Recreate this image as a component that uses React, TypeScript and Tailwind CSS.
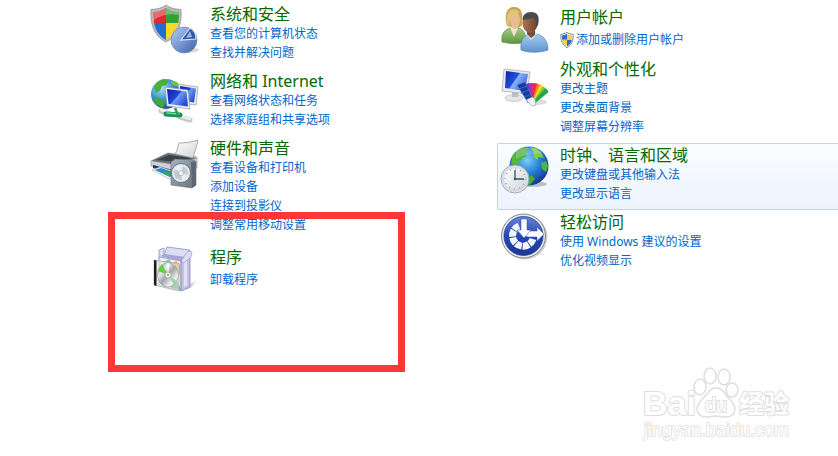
import type { ReactNode } from "react";
import clsx from "clsx";

type Category = {
  title: string;
  links: string[];
  icon: ReactNode;
  shield?: boolean;
  active?: boolean;
};

const iconClass = "w-12 h-12 shrink-0 overflow-visible";

function ShieldShape() {
  return (
    <>
      <path d="M16 1c5 3.500 9 4 15 4.500C32 20 28 32 16 38 4 32 0 20 1 5.500 7 5 11 4.500 16 1Z" fill="#b9bdc0" stroke="#8d9296" strokeWidth="0.8" />
      <path d="M16 4v15H4C3 15 3 11 3 8c5 0 9-1.500 13-4Z" fill="#dd2b27" />
      <path d="M16 4c4 2.500 8 4 13 4 0 3 0 7-1 11H16Z" fill="#35a037" />
      <path d="M4 19h12v17C9 32 5.500 26 4 19Z" fill="#1f6fd0" />
      <path d="M28 19H16v17c7-4 10.500-10 12-17Z" fill="#fbd72b" />
      <path d="M3 8c5 0 9-1.500 13-4 4 2.500 8 4 13 4v3C20 9 10 11 3 17Z" fill="#fff" opacity="0.3" />
    </>
  );
}

function SecurityIcon() {
  return (
    <svg viewBox="0 0 48 48" className={iconClass} aria-hidden="true">
      <defs>
        <linearGradient id="pie" x1="0" y1="0" x2="1" y2="1">
          <stop offset="0" stopColor="#b4cbed" />
          <stop offset="0.5" stopColor="#7898d0" />
          <stop offset="1" stopColor="#3c5ea8" />
        </linearGradient>
      </defs>
      <ShieldShape />
      <ellipse cx="38" cy="46" rx="11" ry="3" fill="#000" opacity="0.15" />
      <circle cx="34" cy="36" r="13" fill="url(#pie)" stroke="#6c88bb" strokeWidth="0.7" />
      <path d="M31 36 40 24c4 2 6 6 6 11Z" fill="#3458a8" stroke="#d5e3f7" strokeWidth="1.2" />
      <path d="m36 34 4-7 2 6Z" fill="#9ab8ea" />
    </svg>
  );
}

function NetworkIcon() {
  return (
    <svg viewBox="0 0 48 48" className={iconClass} aria-hidden="true">
      <defs>
        <radialGradient id="netGlobe" cx="0.35" cy="0.3" r="0.8">
          <stop offset="0" stopColor="#a9e2f8" />
          <stop offset="0.5" stopColor="#3a8fd0" />
          <stop offset="1" stopColor="#124285" />
        </radialGradient>
        <linearGradient id="netScreen" x1="0" y1="0" x2="1" y2="0.7">
          <stop offset="0" stopColor="#0a1fae" />
          <stop offset="0.5" stopColor="#1f47d8" />
          <stop offset="0.55" stopColor="#6d9df5" />
          <stop offset="1" stopColor="#2446ce" />
        </linearGradient>
      </defs>
      <circle cx="16" cy="23" r="15" fill="url(#netGlobe)" />
      <path d="M4 17c1-5 5-8 10-9l5 2-3 4-4 1-2 5-4 2Z" fill="#4cae3b" />
      <path d="m3 26 7 1 5 4-2 6C8 35 4 32 3 26Z" fill="#43a835" />
      <path d="m21 9 6 2 3 5-5-1-4-2Z" fill="#6cc44c" />
      <path d="m28 13 20 3-2 18-16-2Z" fill="#e9ecf1" stroke="#8f98a7" strokeWidth="0.7" />
      <path d="m30 15 16 2.500-2 14-13-2Z" fill="url(#netScreen)" />
      <path d="m15 16 23 3 2 19-23-3Z" fill="#eef0f4" stroke="#8f98a7" strokeWidth="0.7" />
      <path d="m17 18 19.500 2.500 1.500 15-19.500-2.500Z" fill="url(#netScreen)" />
      <path d="m11 40 7 2M30 46l10 3" stroke="#c3c8cc" strokeWidth="5" strokeLinecap="round" />
      <path d="m11 39 7 2M30 45l10 3" stroke="#eceff0" strokeWidth="2.500" strokeLinecap="round" />
      <path d="m16 43 14 1" stroke="#179153" strokeWidth="5" strokeLinecap="round" />
      <path d="m17 42 12 1" stroke="#7ad8a0" strokeWidth="1.500" strokeLinecap="round" />
      <path d="m25 37 3 7" stroke="#2a9c5c" strokeWidth="2.500" />
    </svg>
  );
}

function PrinterIcon() {
  return (
    <svg viewBox="0 0 48 48" className={iconClass} aria-hidden="true">
      <defs>
        <linearGradient id="paper" x1="0" y1="0" x2="1" y2="1">
          <stop offset="0" stopColor="#fff" />
          <stop offset="1" stopColor="#cfd3d6" />
        </linearGradient>
        <linearGradient id="speaker" x1="0" y1="0" x2="1" y2="1">
          <stop offset="0" stopColor="#a7b3bf" />
          <stop offset="1" stopColor="#65727e" />
        </linearGradient>
      </defs>
      <path d="m1 23 17-8 29 4v11l-24 6-22-8Z" fill="#cbd0d4" stroke="#878e94" strokeWidth="0.6" />
      <path d="m1 23 17-8 29 5-20 7Z" fill="#6b7278" />
      <path d="m6 22 13-5 23 3-15 4Z" fill="#3c4348" />
      <path d="M29 5c6 0 13-1 19-3-1 6-3 11-5 18l-18-4c2-3 3-7 4-11Z" fill="url(#paper)" stroke="#92989d" strokeWidth="0.8" />
      <path d="m3 27 20 5v5L3 30Z" fill="#30373c" />
      <path d="m2 32 8-3 13 4v7l-4 1Z" fill="#f1f5f7" stroke="#a3abb1" strokeWidth="0.6" />
      <path d="m5 32 6-2 12 4-3 5Z" fill="#2685d4" />
      <path d="m11 34 4-1 8 3-3 3Z" fill="#37a65b" />
      <path d="m21 24 4-3 19 1 2 2v23l-4 3-21-3Z" fill="url(#speaker)" stroke="#65717c" strokeWidth="0.6" />
      <path d="m41 24 5-1v24l-4 3Z" fill="#5b6873" />
      <circle cx="31" cy="35" r="9.500" fill="#e7eaec" stroke="#586570" strokeWidth="0.8" />
      <circle cx="31" cy="35" r="7" fill="#c3cad0" />
      <path d="M31 35 25 31a7 7 0 0 1 8-3ZM31 35l7 2a7 7 0 0 1-6 5Z" fill="#eceff1" />
      <circle cx="31" cy="35" r="2.500" fill="#f5f6f7" stroke="#8b959d" strokeWidth="0.5" />
    </svg>
  );
}

function ProgramsIcon() {
  return (
    <svg viewBox="0 0 48 48" className={iconClass} aria-hidden="true">
      <defs>
        <linearGradient id="disc" x1="0" y1="0" x2="1" y2="1">
          <stop offset="0" stopColor="#8f9496" />
          <stop offset="0.3" stopColor="#e8eaea" />
          <stop offset="0.5" stopColor="#a0a5a7" />
          <stop offset="0.75" stopColor="#f3f4f4" />
          <stop offset="1" stopColor="#8a9092" />
        </linearGradient>
      </defs>
      <path d="m34 44 12-6-5 7-10 3Z" fill="#000" opacity="0.15" />
      <path d="m9 7 5-2v10l-5 3ZM17 4l23 3-2 8-24-3Z" fill="#dcdcf4" stroke="#9291bd" strokeWidth="0.8" />
      <path d="m10 13 5-2 20 3-4 5Z" fill="#a7a7d3" />
      <path d="m9 14 22 4v30L9 42Z" fill="#f0f0fb" stroke="#9696c4" strokeWidth="0.8" />
      <path d="m31 18 9-6v32l-9 4Z" fill="#c3c2e4" stroke="#8583b5" strokeWidth="0.8" />
      <path d="m34 19 3-2v25l-3 2Z" fill="#e4e3f5" />
      <path d="m31 18 7-10 4 1-1 5-7 6Z" fill="#dcdcf2" stroke="#9291bd" strokeWidth="0.6" />
      <path d="m22 20 4-2 4 3v11l-8-5Z" fill="#f0b95c" />
      <path d="m13 19 6-3 3 4-4 4Z" fill="#8fc7a0" />
      <path d="m21 40 6-2 4 9-10-2Z" fill="#62ac77" />
      <path d="m4 17 25 4v27L4 42Z" fill="#dfe5e3" fillOpacity="0.6" stroke="#a4acab" strokeWidth="0.7" />
      <path d="m4 17 2.500.5V43L4 42Z" fill="#1c1e1f" />
      <ellipse cx="18" cy="32" rx="10.500" ry="12" fill="url(#disc)" stroke="#85898a" strokeWidth="0.5" />
      <path d="m18 32-10-4c1-3 2-5 4-7Z" fill="#63cf43" />
      <path d="m18 32 9 6-3 4Z" fill="#9fd6a4" />
      <path d="m18 32-2-12h4Z" fill="#fff" opacity="0.7" />
      <circle cx="18" cy="32" r="3" fill="#f3f3f3" stroke="#a0a4a5" strokeWidth="0.7" />
      <circle cx="18" cy="32" r="1" fill="#9aa0a0" />
    </svg>
  );
}

function UsersIcon() {
  return (
    <svg viewBox="0 0 48 48" className={iconClass} aria-hidden="true">
      <defs>
        <linearGradient id="green" x1="0" y1="0" x2="0" y2="1">
          <stop offset="0" stopColor="#a3cc82" />
          <stop offset="1" stopColor="#5c9540" />
        </linearGradient>
        <linearGradient id="blue" x1="0" y1="0" x2="0" y2="1">
          <stop offset="0" stopColor="#a5cdf0" />
          <stop offset="1" stopColor="#5e94cc" />
        </linearGradient>
        <linearGradient id="skin" x1="0" y1="0" x2="1" y2="0">
          <stop offset="0" stopColor="#aa7452" />
          <stop offset="1" stopColor="#6f432b" />
        </linearGradient>
      </defs>
      <path d="M2 39c-1-8 2-12 8-14h9c5 2 7 6 7 14-7 2-17 2-24 0Z" fill="url(#green)" stroke="#588443" strokeWidth="0.6" />
      <path d="m10 24 4 10 4-9Z" fill="#f5e3d2" />
      <path d="M7 23C4 13 6 5 13 4c8-1 11 6 9 19l-5 2Z" fill="#c8a653" />
      <path d="M10 14c3-1 5-3 7-5 2 3 3 5 3 9-1 5-3 8-5 8-3 0-5-5-5-12Z" fill="#e9bb93" />
      <path d="M7 14c1-7 7-10 12-5-3 3-6 5-9 6l-1 8C7 21 6 18 7 14Z" fill="#e0c578" />
      <path d="M21 47c-1-9 2-14 8-16h8c7 2 11 7 11 16-8 3-20 3-27 0Z" fill="url(#blue)" stroke="#4a7aac" strokeWidth="0.6" />
      <path d="m26 31 5 6 6-6-2-3h-7Z" fill="#cfe3f6" />
      <path d="M27 26h8v6l-4 3-4-4Z" fill="#7b4d33" />
      <ellipse cx="30" cy="20" rx="7.500" ry="10" fill="url(#skin)" />
      <path d="M23 17c-1-5 3-8 8-8 7 0 9 5 7 13l-2 3c0-5 0-7-2-10-4 1-7 1-11 2Z" fill="#494b4e" />
    </svg>
  );
}

function PersonalizeIcon() {
  const colors = ["#5d36c0", "#a12cc0", "#d92693", "#ea3037", "#f68722", "#f6db26", "#86ca2e", "#25a94b"];
  return (
    <svg viewBox="0 0 48 48" className={iconClass} aria-hidden="true">
      <defs>
        <linearGradient id="desk" x1="0" y1="0" x2="1" y2="0.6">
          <stop offset="0" stopColor="#0a1fa8" />
          <stop offset="0.5" stopColor="#2350dc" />
          <stop offset="0.55" stopColor="#8ab4f8" />
          <stop offset="1" stopColor="#3a66dc" />
        </linearGradient>
      </defs>
      <ellipse cx="14" cy="39" rx="9" ry="3.500" fill="#e3e5e7" stroke="#b1b6bb" strokeWidth="0.6" />
      <path d="m12 31 7 1-1 6h-6Z" fill="#bbc0c6" />
      <path d="m4 10 26 3-3 22-25-3Z" fill="#e9ebee" stroke="#9ba3ae" strokeWidth="0.7" />
      <path d="m6 12 22 3-3 17-20-3Z" fill="url(#desk)" />
      <ellipse cx="38" cy="43" rx="9" ry="3" fill="#000" opacity="0.13" />
      {colors.map((color, i) => (
        <path key={color} d="M32 45 30 25l1-1h3l1 1-1 20Z" fill={color} transform={`rotate(${i * 9 - 15} 32 44)`} />
      ))}
      <path d="m17 26 8-3 8 17-5 4Z" fill="#153d9e" stroke="#5c81d6" strokeWidth="0.6" />
      <path d="m19 30 8-3M21 34l8-3M24 38l8-3" stroke="#4f74d0" strokeWidth="0.7" />
      <path d="m26 41 6-3 3 2 1 6-4 1Z" fill="#edf1f6" stroke="#8797ae" strokeWidth="0.6" />
    </svg>
  );
}

function ClockIcon() {
  return (
    <svg viewBox="0 0 48 48" className={iconClass} aria-hidden="true">
      <defs>
        <radialGradient id="globe" cx="0.45" cy="0.35" r="0.7">
          <stop offset="0" stopColor="#79d0f6" />
          <stop offset="0.45" stopColor="#2a85d8" />
          <stop offset="1" stopColor="#112a83" />
        </radialGradient>
        <linearGradient id="dial" x1="0" y1="0" x2="1" y2="1">
          <stop offset="0" stopColor="#fff" />
          <stop offset="1" stopColor="#cfd6d9" />
        </linearGradient>
      </defs>
      <ellipse cx="33" cy="39" rx="14" ry="3" fill="#000" opacity="0.22" />
      <circle cx="29" cy="21" r="19.500" fill="url(#globe)" />
      <path d="M12 12c3-6 8-9 15-10l1 3-3 2 2 4-5 2-3 5-4 3-4-2Z" fill="#55b53c" />
      <path d="m30 2 6 1 5 4 3 6-5-1-2 3-4-4 1-4Z" fill="#7bce4f" />
      <path d="m41 18 5-2 2 5-2 6-4-3Z" fill="#51b43e" />
      <path d="m26 30 7 1 2 3-5 6-5-1Z" fill="#43ab37" />
      <path d="M16 6c8-5 20-4 26 2-8 1-17 1-26 6Z" fill="#fff" opacity="0.2" />
      <circle cx="15" cy="34" r="14" fill="#dce1e4" stroke="#929ea4" strokeWidth="0.8" />
      <circle cx="15" cy="34" r="11.500" fill="url(#dial)" stroke="#bcc5ca" strokeWidth="0.5" />
      <circle cx="15" cy="34" r="10" fill="none" stroke="#6e7c84" strokeWidth="1.500" strokeDasharray="0.6 4.636" />
      <path d="M15 25v9h9" fill="none" stroke="#32566d" strokeWidth="1.300" />
      <circle cx="15" cy="34" r="1.200" fill="#32566d" />
    </svg>
  );
}

function EaseIcon() {
  return (
    <svg viewBox="0 0 48 48" className={iconClass} aria-hidden="true">
      <defs>
        <linearGradient id="ease" x1="0" y1="0" x2="0" y2="1">
          <stop offset="0" stopColor="#6685d8" />
          <stop offset="0.5" stopColor="#2547b3" />
          <stop offset="1" stopColor="#1c3797" />
        </linearGradient>
      </defs>
      <circle cx="25" cy="25" r="22.500" fill="#000" opacity="0.18" />
      <circle cx="23.500" cy="24" r="22" fill="#e5e7ea" stroke="#777d86" strokeWidth="0.9" />
      <circle cx="23.500" cy="24" r="19.500" fill="url(#ease)" stroke="#1d348a" strokeWidth="0.7" />
      <path d="M33 27A10.500 10.500 0 1 1 19 14" fill="none" stroke="#f3f6fb" strokeWidth="7" strokeDasharray="6.200 0.900" />
      <path d="M28 19h9v-4l7 7-7 7v-4h-9l-3-1Z" fill="#fff" stroke="#2a4cb5" strokeWidth="0.5" />
      <path d="M21 7h6v11h4l-7 8-7-8h4Z" fill="#fff" stroke="#2a4cb5" strokeWidth="0.5" />
    </svg>
  );
}

const left: Category[] = [
  { title: "系统和安全", links: ["查看您的计算机状态", "查找并解决问题"], icon: <SecurityIcon /> },
  { title: "网络和 Internet", links: ["查看网络状态和任务", "选择家庭组和共享选项"], icon: <NetworkIcon /> },
  { title: "硬件和声音", links: ["查看设备和打印机", "添加设备", "连接到投影仪", "调整常用移动设置"], icon: <PrinterIcon /> },
  { title: "程序", links: ["卸载程序"], icon: <ProgramsIcon /> },
];

const right: Category[] = [
  { title: "用户帐户", links: ["添加或删除用户帐户"], icon: <UsersIcon />, shield: true },
  { title: "外观和个性化", links: ["更改主题", "更改桌面背景", "调整屏幕分辨率"], icon: <PersonalizeIcon /> },
  { title: "时钟、语言和区域", links: ["更改键盘或其他输入法", "更改显示语言"], icon: <ClockIcon />, active: true },
  { title: "轻松访问", links: ["使用 Windows 建议的设置", "优化视频显示"], icon: <EaseIcon /> },
];

function CategoryItem({ item }: { item: Category }) {
  const single = item.links.length === 1;
  return (
    <section
      className={clsx(
        "flex gap-3 border border-r-0 rounded-l-xs pl-[2px] pt-px",
        single ? "pb-[3px]" : "pb-[6px]",
        item.active ? "border-[#b8d6fb] bg-linear-to-b from-[#fbfdff] to-[#ebf3fd]" : "border-transparent"
      )}
    >
      <div>{item.icon}</div>
      <div className={clsx("min-w-0", single && "pt-1")}>
        <h2 className="text-base leading-5 text-[#006a00]">
          <a href="#">{item.title}</a>
        </h2>
        <ul className={clsx("text-xs leading-[19px] text-[#0066cc]", single && "mt-[3px]")}>
          {item.links.map((link) => (
            <li key={link}>
              <a href="#" className="inline-flex items-center gap-[2px] hover:underline">
                {item.shield && (
                  <svg viewBox="0 0 32 39" className="w-[14px] h-4" aria-hidden="true">
                    <path d="M16 1c5 3 9 4 15 4.500C32 20 28 32 16 38 4 32 0 20 1 5.500 7 5 11 4 16 1Z" fill="#e9edf1" stroke="#6f7780" strokeWidth="2" />
                    <path d="M16 5v14H4V8c5 0 8-1 12-3ZM28 19H16v16c7-4 11-9 12-16Z" fill="#2470d2" />
                    <path d="M16 5c4 2 7 3 12 3v11H16ZM4 19h12v16C9 31 5 26 4 19Z" fill="#f8cf3a" />
                  </svg>
                )}
                {link}
              </a>
            </li>
          ))}
        </ul>
      </div>
    </section>
  );
}

function Watermark() {
  return (
    <svg
      viewBox="0 0 152 74"
      className="absolute right-11 bottom-4 w-[152px] overflow-visible font-['Liberation_Sans','Noto_Sans_CJK_SC',sans-serif]"
      role="img"
      aria-label="Baidu 经验"
    >
      <g fill="#fff" stroke="#dedede" strokeWidth="1.500" strokeLinejoin="round">
        <ellipse cx="58" cy="21" rx="6" ry="8" />
        <ellipse cx="68" cy="10" rx="6" ry="8" />
        <ellipse cx="82" cy="11" rx="6" ry="8" />
        <ellipse cx="90" cy="24" rx="6" ry="7" />
        <path d="M74 22c5 0 7 3 10 7 4 5 9 8 9 14 0 5-4 8-9 8-4 0-6-1-10-1s-6 1-10 1c-5 0-9-3-9-8 0-6 5-9 9-14 3-4 5-7 10-7Z" />
      </g>
      <g fill="#fff" stroke="#dedede" strokeWidth="2" paintOrder="stroke" strokeLinejoin="round">
        <text x="1" y="49" fontSize="34" fontWeight="700">Bai</text>
        <text x="63" y="46" fontSize="20">du</text>
        <text x="97" y="47" fontSize="25" fontWeight="700">经验</text>
        <text x="2" y="70" fontSize="18" strokeWidth="1.500">jingyan.baidu.com</text>
      </g>
    </svg>
  );
}

export default function App() {
  return (
    <main className="relative min-h-screen overflow-hidden bg-white font-['Noto_Sans','Noto_Sans_CJK_SC',sans-serif]" lang="zh-CN">
      <div className="flex pl-[147px]">
        <div className="w-[350px] shrink-0 pt-[2px]">
          {left.map((item) => (
            <CategoryItem key={item.title} item={item} />
          ))}
        </div>
        <div className="min-w-0 flex-1 pt-px">
          {right.map((item) => (
            <CategoryItem key={item.title} item={item} />
          ))}
        </div>
      </div>
      {/* Highlight frame laid over the programs category */}
      <div className="pointer-events-none absolute left-[108px] top-[212px] h-[160px] w-[297px] border-[7px] border-[#fb3737]" />
      <Watermark />
    </main>
  );
}
